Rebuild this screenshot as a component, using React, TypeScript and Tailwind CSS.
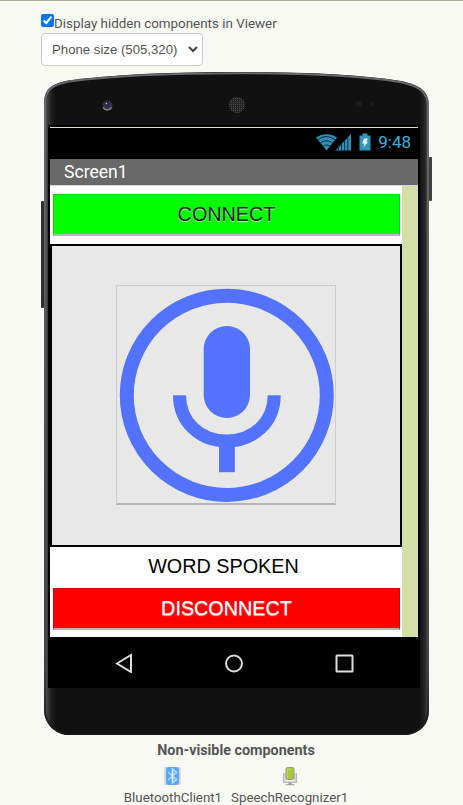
import React from "react";

function PhoneShell() {
  return (
    <svg className="absolute inset-0" width="392" height="663" viewBox="0 0 392 663" fill="none">
      <defs>
        <linearGradient id="edge" x1="0" y1="0" x2="1" y2="0">
          <stop offset="0" stopColor="#68696b" />
          <stop offset="0.008" stopColor="#404142" />
          <stop offset="0.02" stopColor="#1c1d1d" />
          <stop offset="0.03" stopColor="#111" />
          <stop offset="0.975" stopColor="#111" />
          <stop offset="0.99" stopColor="#262627" />
          <stop offset="1" stopColor="#666" />
        </linearGradient>
        <linearGradient id="rim" x1="0" y1="0" x2="0" y2="663" gradientUnits="userSpaceOnUse">
          <stop offset="0" stopColor="#66686a" />
          <stop offset="0.12" stopColor="#626466" />
          <stop offset="0.9" stopColor="#414244" />
          <stop offset="1" stopColor="#161616" />
        </linearGradient>
        <pattern id="mesh" width="2" height="2" patternUnits="userSpaceOnUse">
          <rect width="2" height="2" fill="#242424" />
          <rect width="1" height="1" fill="#4c4c4c" />
        </pattern>
      </defs>
      <rect x="0" y="129" width="3" height="107" rx="1" fill="#303133" />
      <rect x="388" y="85" width="3" height="44" rx="1" fill="#414143" />
      <path
        d="M3 31C3 18 9 12 27 8.500C76 2 132 0 196 0C260 0 316 2 360 9C380 13 388 20 388 34V638C388 652 380 663 360 663H30C13 663 3 651 3 638Z"
        fill="url(#edge)"
      />
      <path
        d="M4 31C4 19 10 13 28 9.500C76 3 132 1.200 196 1.200C260 1.200 316 3 359 10C379 14 387 21 387 34V638C387 651 379 662.500 360 662.500H30C14 662.500 4 650 4 638Z"
        stroke="url(#rim)"
        strokeWidth="2"
      />
      <rect x="7" y="53" width="372" height="563" fill="#000" />
      <circle cx="66.500" cy="33.500" r="5" fill="#343238" />
      <path d="M62 35.500q4.500 5 8.500 0" stroke="#858187" strokeWidth="1.500" />
      <circle cx="66.300" cy="32.500" r="2.200" fill="#29256e" />
      <circle cx="65.500" cy="31.500" r=".8" fill="#b8b6e8" />
      <circle cx="196" cy="33" r="8" fill="url(#mesh)" />
      <circle cx="318" cy="32.500" r="3" fill="#1d1b1b" />
      <circle cx="331" cy="32.500" r="2" fill="#1d1b1b" />
    </svg>
  );
}

function StatusBar() {
  return (
    <div className="flex h-[31px] items-center justify-end bg-black pb-[3px] pr-[7px] text-[#38aedb]">
      <svg width="58" height="20" viewBox="0 0 58 20" fill="none" className="mr-[4px]">
        <path d="M0 5.500C6 1 15 1 21 5.500L10.500 18.500Z" fill="#2f8fb7" />
        <path d="M1.500 8.200C7 3.500 14 3.500 19.500 8.200M4.200 11.300C8 8 13 8 16.800 11.300M6.800 14.500C9 12.500 12 12.500 14.200 14.500" stroke="#05202c" strokeWidth="1" />
        <path d="M19.500 18.500L35 2V18.500Z" fill="#2f8fb7" />
        <path d="M22.500 14v5M25.500 11v8M28.500 8v11M31.800 4v15" stroke="#0a2f40" strokeWidth="1" />
        <path d="M46.500 1.500h5V3.500H54.500V18.500H43.500V3.500H46.500Z" fill="#3294b9" />
        <path d="M48 6.500h4l-1.500 3.200H52L47.500 15.500l.8-4H46.200Z" fill="#e6f2f5" />
      </svg>
      <span className="font-['Roboto',sans-serif] text-[17px] leading-5">9:48</span>
    </div>
  );
}

function Microphone() {
  return (
    <svg width="218" height="217" viewBox="117 286 218 217" fill="none">
      <ellipse cx="226.800" cy="395.300" rx="100" ry="99.600" stroke="#5272ff" strokeWidth="14" />
      <rect x="203.700" y="326" width="46.300" height="92" rx="23.150" fill="#5272ff" />
      <path d="M179.500 395.200C179.500 422 200 441 226.800 441S274.200 422 274.200 395.200" stroke="#5272ff" strokeWidth="13" />
      <path d="M219 444h15.800v28.200H219Z" fill="#5272ff" />
    </svg>
  );
}

function BluetoothIcon() {
  return (
    <svg width="17" height="18" viewBox="0 0 17 18" fill="none">
      <rect width="17" height="18" fill="#d9dadb" />
      <rect x="2" width="13" height="18" rx="3" fill="#55a6fa" />
      <path d="M4 5l8.500 7.500L8.500 16V2l4 3.500L4 13" stroke="#b9dcff" strokeWidth="1.600" />
      <path d="M8.500 3v12" stroke="#e5f3ff" strokeWidth="1.200" />
    </svg>
  );
}

function SpeechIcon() {
  return (
    <svg width="16" height="19" viewBox="0 0 16 19" fill="none">
      <path d="M1 6h3v8h8V6h3v10H1Z" fill="#d6d6d6" />
      <path d="M1.500 6v9.500h13V6" stroke="#b8b8b8" strokeWidth="1" />
      <path d="M6.500 16h3v1.200h3v1h-9v-1h3Z" fill="#9b9b9b" />
      <rect x="4" y=".5" width="8" height="12" rx="1.500" fill="#a5c93d" stroke="#969c87" />
      <path d="M5.500 11V2.500h3.500" stroke="#bbd95e" />
    </svg>
  );
}

export default function App() {
  return (
    <div className="h-[805px] w-[463px] overflow-hidden border-t border-[#afb09f] bg-[#f8f9f3] font-['Roboto',sans-serif] text-[13.4px] text-[#555]">
      <div className="pl-[41px] pt-[13px]">
        <label className="flex h-[19px] items-start">
          <input type="checkbox" defaultChecked className="size-[13px] shrink-0" />
          <span className="mt-[1px] whitespace-nowrap leading-[18px]">Display hidden components in Viewer</span>
        </label>
        <div className="flex h-[33px] w-[162px] items-center justify-between rounded border border-[#ccc] bg-white pl-[10px] pr-[4px] font-['Liberation_Sans',Arial,sans-serif] text-[13.2px]">
          <span>Phone size (505,320)</span>
          <svg width="10" height="7" viewBox="0 0 10 7" fill="none"><path d="M1 1l4 4 4-4" stroke="#444" strokeWidth="2" /></svg>
        </div>
      </div>

      <main className="relative ml-[41px] mt-[6px] h-[663px] w-[392px] pl-[9px] pt-[55px]">
        <PhoneShell />
        <div className="relative w-[368px] border-t border-[#dfdfb4]">
          <StatusBar />
          <div className="flex h-[27px] items-center border-b border-[#d4d4d4] bg-[#696969] pl-[14px] pt-px text-[17.6px] text-white">Screen1</div>
          <div className="flex h-[451px] bg-[#d2e0a6] font-['Liberation_Sans',Arial,sans-serif]">
            <div className="w-[352px] bg-white pt-2">
              <button className="mx-[3px] block h-[42px] w-[347px] border border-b-2 border-[#00d900] border-b-[#b5b5b5] bg-[#0f0] text-center text-[19.8px] text-[#222] [text-shadow:0_1px_1px_rgba(255,255,255,0.7)]">CONNECT</button>
              <div className="mt-2 flex h-[303px] justify-center border-2 border-black bg-[#e8e8e8] pt-[39px]">
                <button className="h-[220px] w-[220px] border border-b-2 border-[#ccc] border-b-[#b5b5b5]">
                  <Microphone />
                </button>
              </div>
              <div className="h-[41px] pr-[5px] pt-1 text-center text-[19.8px] leading-[30px] text-black">WORD SPOKEN</div>
              <button className="mx-[3px] block h-[42px] w-[347px] border border-b-2 border-[#dc0000] border-b-[#b5b5b5] bg-[#f00] text-center text-[19.8px] text-white [text-shadow:0_1px_1px_rgba(255,255,255,0.7)]">DISCONNECT</button>
            </div>
          </div>
          <div className="flex h-[51px] items-center justify-between bg-black pl-[65px] pr-[64px]">
            <svg width="18" height="20" viewBox="0 0 18 20" fill="none"><path d="M2 10.500L16 2v17Z" stroke="#ddd" strokeWidth="2" /></svg>
            <svg width="20" height="20" viewBox="0 0 20 20" fill="none"><circle cx="10" cy="10.500" r="8" stroke="#ddd" strokeWidth="2" /></svg>
            <svg width="19" height="20" viewBox="0 0 19 20" fill="none"><rect x="1.500" y="2.500" width="16" height="16" rx=".5" stroke="#ddd" strokeWidth="2" /></svg>
          </div>
        </div>
      </main>

      <footer className="w-[472px] text-center">
        <h2 className="pt-[7px] text-[14.35px] font-bold leading-[18px]">Non-visible components</h2>
        <div className="mt-[7px] flex justify-center gap-[9px] text-[13.3px]">
          <div className="flex flex-col items-center"><BluetoothIcon /><span className="mt-[5px] leading-4">BluetoothClient1</span></div>
          <div className="flex flex-col items-center"><SpeechIcon /><span className="mt-1 leading-4">SpeechRecognizer1</span></div>
        </div>
      </footer>
    </div>
  );
}
